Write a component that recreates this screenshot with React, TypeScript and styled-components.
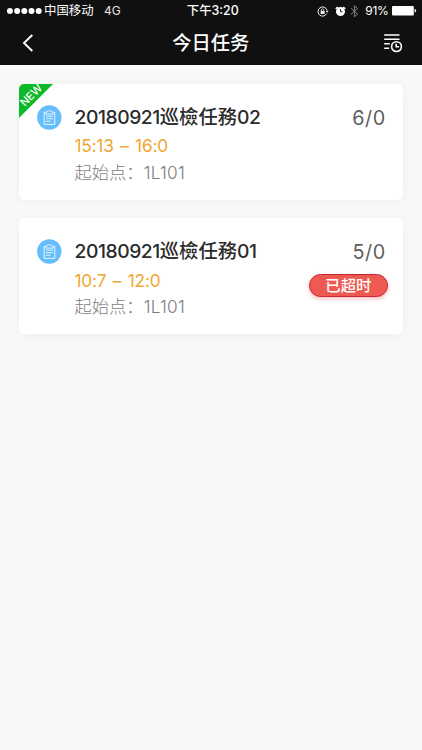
import React from "react";
import styled, { createGlobalStyle } from "styled-components";

const GlobalStyle = createGlobalStyle`
  * { box-sizing: border-box; }
  body {
    margin: 0;
    background: #f8f8f8;
    font-family: Inter, "Noto Sans CJK SC", sans-serif;
  }
`;

const Screen = styled.div`
  min-height: 750px;
  background: #f8f8f8;
`;

const Header = styled.header`
  height: 65.4px;
  background: #101010;
  color: #fff;
`;

const StatusBar = styled.div`
  display: grid;
  grid-template-columns: 1fr auto 1fr;
  align-items: center;
  height: 22px;
  padding: 0 5.5px 0 7px;
  font-size: 12.4px;
  line-height: 22px;
  white-space: pre;
`;

const Carrier = styled.div`
  display: flex;
  align-items: center;
`;

const Network = styled.span`
  margin-left: 10.5px;
  color: #e6e6e6;
  font-size: 12px;
`;

const Clock = styled.div`
  font-weight: 500;
  padding-left: 2px;
`;

const Indicators = styled.div`
  display: flex;
  align-items: center;
  justify-content: flex-end;
`;

const Percent = styled.span`
  margin: 0 3px 0 6px;
  font-size: 12px;
  letter-spacing: -0.3px;
`;

const Icon = styled.svg<{ $gap?: number }>`
  display: block;
  flex: none;
  margin-left: ${(p) => p.$gap ?? 0}px;
`;

const NavBar = styled.nav`
  display: grid;
  grid-template-columns: 40px 1fr 40px;
  align-items: center;
  height: 42px;
  padding: 0 18.5px 0 18px;
`;

const Title = styled.h1`
  margin: 0;
  text-align: center;
  font-size: 19.3px;
  font-weight: 500;
  line-height: 42px;
`;

const NavButton = styled.button<{ $end?: boolean }>`
  display: flex;
  justify-content: ${(p) => (p.$end ? "flex-end" : "flex-start")};
  padding: 0;
  border: 0;
  background: none;
  color: #fff;
`;

const TaskList = styled.main`
  display: flex;
  flex-direction: column;
  gap: 18.3px;
  padding: 18.2px 18.7px 18px 18.5px;
`;

const Card = styled.article`
  position: relative;
  display: grid;
  grid-template-columns: 38px 1fr auto;
  height: 116.2px;
  padding: 21px 15.5px 0 18px;
  border-radius: 5px;
  background: #fff;
  box-shadow: 0 1px 8px rgba(0, 0, 0, 0.045);
`;

const NewRibbon = styled.div`
  position: absolute;
  top: 0;
  left: 0;
  display: flex;
  align-items: center;
  justify-content: center;
  width: 34px;
  height: 34px;
  padding: 0 10px 11px 0;
  border-top-left-radius: 5px;
  background: linear-gradient(135deg, #0cb927 49.3%, transparent 50.7%);
`;

const RibbonText = styled.span`
  color: #fff;
  font-size: 11px;
  font-weight: 500;
  line-height: 12px;
  transform: rotate(-45deg);
`;

const Details = styled.div`
  display: flex;
  flex-direction: column;
  white-space: nowrap;
`;

const TaskName = styled.h2`
  height: 25px;
  margin: 0;
  color: #2b2b2b;
  font-size: 19.3px;
  font-weight: 500;
  line-height: 25px;
`;

const Digits = styled.span<{ $spacing: number }>`
  font-weight: 400;
  letter-spacing: ${(p) => p.$spacing}px;
`;

const NameDigits = styled(Digits)`
  font-weight: 450;
`;

const TimeRange = styled.div`
  margin-top: 3.5px;
  color: #f0a732;
  font-size: 17.3px;
  line-height: 26px;
  word-spacing: 1.9px;
`;

const StartPoint = styled.div`
  margin-top: 0.5px;
  color: #7e7e7e;
  font-size: 17.3px;
  font-weight: 300;
  line-height: 26px;
`;

const PlaceCode = styled(Digits)`
  font-weight: 300;
`;

const Side = styled.div`
  display: flex;
  flex-direction: column;
  align-items: flex-end;
`;

const Count = styled.div`
  margin-right: 2px;
  color: #606060;
  font-size: 19.8px;
  letter-spacing: 0.6px;
  line-height: 26px;
`;

const Overdue = styled.div`
  display: flex;
  align-items: center;
  justify-content: center;
  width: 79px;
  height: 23px;
  margin-top: 9px;
  border: 1.5px solid #c9263a;
  border-radius: 12px;
  background: #ee5a52;
  box-shadow: 0 2px 4px rgba(238, 70, 70, 0.35);
  color: #fff;
  font-size: 15.3px;
  font-weight: 500;
  line-height: 20px;
`;

const TaskIcon = () => (
  <Icon width="25" height="25" viewBox="0 0 25 25" fill="none">
    <circle cx="12.3" cy="12.5" r="12.2" fill="#65bdfb" />
    <g stroke="#e9f6ff" strokeWidth="1" strokeLinejoin="round" strokeLinecap="round">
      <path d="M8.7 7.2H7.2v12.2h10.6V7.2h-1.5" />
      <path d="M8.8 8.7c.1-1.9 1.4-2.9 3.7-2.9s3.6 1 3.7 2.9z" />
      <path d="M9.5 11.2h6M9.5 13.7h6M9.5 16.2h3.5" />
    </g>
  </Icon>
);

type Task = {
  suffix: string;
  time: string;
  place: string;
  count: string;
  isNew?: boolean;
  overdue?: boolean;
};

const tasks: Task[] = [
  { suffix: "02", time: "15:13 – 16:0", place: "1L101", count: "6/0", isNew: true },
  { suffix: "01", time: "10:7 – 12:0", place: "1L101", count: "5/0", overdue: true },
];

const TaskCard = ({ task }: { task: Task }) => (
  <Card>
    {task.isNew && (
      <NewRibbon>
        <RibbonText>NEW</RibbonText>
      </NewRibbon>
    )}
    <TaskIcon />
    <Details>
      <TaskName>
        <NameDigits $spacing={-0.45}>20180921</NameDigits>巡檢任務
        <NameDigits $spacing={-0.45}>{task.suffix}</NameDigits>
      </TaskName>
      <TimeRange>
        <Digits $spacing={-0.22}>{task.time}</Digits>
      </TimeRange>
      <StartPoint>
        起始点：<PlaceCode $spacing={0.25}>{task.place}</PlaceCode>
      </StartPoint>
    </Details>
    <Side>
      <Count>{task.count}</Count>
      {task.overdue && <Overdue>已超时</Overdue>}
    </Side>
  </Card>
);

export default function App() {
  return (
    <Screen>
      <GlobalStyle />
      <Header>
        <StatusBar>
          <Carrier>
            <Icon width="37" height="7" viewBox="0 0 37 7" fill="#fff">
              {[2.9, 10.1, 17.3, 24.5, 31.7].map((x) => (
                <circle key={x} cx={x} cy="3" r="3" />
              ))}
            </Icon>
            中国移动<Network>4G</Network>
          </Carrier>
          <Clock>下午3:20</Clock>
          <Indicators>
            <Icon width="12" height="11" viewBox="0 0 12 11" fill="none" stroke="#eee">
              <path d="M9.7 7.6A4.6 4.6 0 1 1 10 4.2" />
              <path d="M8.6 4.8h3L10.1 6.8z" fill="#eee" stroke="none" />
              <rect x="3.6" y="5" width="4" height="3" fill="#eee" stroke="none" />
              <path d="M4.4 5V4a1.2 1.2 0 0 1 2.4 0v1" strokeWidth=".8" />
            </Icon>
            <Icon $gap={6} width="11" height="11" viewBox="0 0 11 11">
              <circle cx="5.5" cy="5.5" r="4.5" fill="#fff" />
              <path d="M.7 2.8 2.8.9M10.3 2.8 8.2.9" stroke="#fff" strokeWidth="1.4" />
              <path d="M5.5 3v2.7h2" stroke="#101010" strokeWidth=".9" fill="none" />
            </Icon>
            <Icon $gap={4.5} width="9" height="13" viewBox="0 0 9 13" fill="none" stroke="#858585" strokeWidth="1">
              <path d="M1 3.2 7.5 9.1 4.4 11.8V.8l3.1 2.7L1 9.3" />
            </Icon>
            <Percent>91%</Percent>
            <Icon width="25" height="10" viewBox="0 0 25 10" fill="#fff">
              <rect x="0" y="0" width="21.8" height="9.5" rx="1" />
              <path d="M22.7 3c2 .3 2 3.1 0 3.4z" />
            </Icon>
          </Indicators>
        </StatusBar>
        <NavBar>
          <NavButton aria-label="返回">
            <Icon $gap={4} width="12" height="20" viewBox="0 0 12 20" fill="none" stroke="#fff" strokeWidth="1.9">
              <path d="M10.3 2 2 10l8.3 8" />
            </Icon>
          </NavButton>
          <Title>今日任务</Title>
          <NavButton $end aria-label="历史任务">
            <Icon width="21" height="20" viewBox="0 0 21 20" fill="none" stroke="#fff" strokeWidth="1.6">
              <path d="M1.2 2h15.3M1.2 6.3h15.3M1.2 10.8h5.6M1.2 15.2h5" />
              <circle cx="13.5" cy="13.6" r="4.9" />
              <path d="M13.2 10.8v3h2.8" />
            </Icon>
          </NavButton>
        </NavBar>
      </Header>
      <TaskList>
        {tasks.map((task) => (
          <TaskCard key={task.suffix} task={task} />
        ))}
      </TaskList>
    </Screen>
  );
}
